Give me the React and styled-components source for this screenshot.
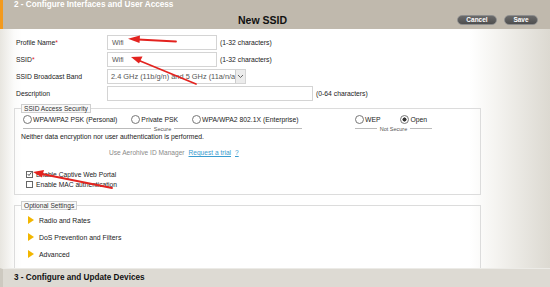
import styled, { createGlobalStyle } from "styled-components";

const GlobalStyle = createGlobalStyle`
  html, body {
    margin: 0;
    padding: 0;
    width: 550px;
    height: 287px;
    overflow: hidden;
    background: #fff;
  }
  * { box-sizing: border-box; }
`;

const FIELDS = [
  { label: "Profile Name", required: true, value: "Wifi", hint: "(1-32 characters)", width: 110 },
  { label: "SSID", required: true, value: "Wifi", hint: "(1-32 characters)", width: 110 },
  { label: "SSID Broadcast Band", select: true, value: "2.4 GHz (11b/g/n) and 5 GHz (11a/n/ac)", width: 139 },
  { label: "Description", value: "", hint: "(0-64 characters)", width: 206 },
];

const OPTIONAL = ["Radio and Rates", "DoS Prevention and Filters", "Advanced"];

const App = () => {
  return (
    <Page>
      <GlobalStyle />
      <TopBar>
        <StepTitle>2 - Configure Interfaces and User Access</StepTitle>
        <HeaderRow>
          <PanelTitle>New SSID</PanelTitle>
          <Buttons>
            <PillButton $w={40}>Cancel</PillButton>
            <PillButton $w={34}>Save</PillButton>
          </Buttons>
        </HeaderRow>
      </TopBar>

      <Content>
        <Form>
          {FIELDS.map((f) => (
            <FieldRow key={f.label}>
              <Label>
                {f.label}
                {f.required && <Req>*</Req>}
              </Label>
              {f.select ? (
                <Select $w={f.width}>
                  <SelectText>{f.value}</SelectText>
                  <SelectArrow>
                    <svg width="7" height="5" viewBox="0 0 7 5">
                      <path d="M1 1 L3.5 3.5 L6 1" fill="none" stroke="#666" strokeWidth="1" />
                    </svg>
                  </SelectArrow>
                </Select>
              ) : (
                <TextBox $w={f.width}>{f.value}</TextBox>
              )}
              {f.hint && <Hint>{f.hint}</Hint>}
            </FieldRow>
          ))}
        </Form>

        <Group $mt={3} $pb={5}>
          <Legend>SSID Access Security</Legend>
          <RadioLine>
            <RadioGroup $w={279}>
              <Radios $gap={14}>
                <Radio>WPA/WPA2 PSK (Personal)</Radio>
                <Radio>Private PSK</Radio>
                <Radio>WPA/WPA2 802.1X (Enterprise)</Radio>
              </Radios>
              <Divider>Secure</Divider>
            </RadioGroup>
            <RadioGroup $w={77}>
              <Radios $gap={20}>
                <Radio>WEP</Radio>
                <Radio $on>Open</Radio>
              </Radios>
              <Divider>Not Secure</Divider>
            </RadioGroup>
          </RadioLine>
          <Note>Neither data encryption nor user authentication is performed.</Note>
          <IdManager>
            Use Aerohive ID Manager <TrialLink>Request a trial</TrialLink>
            <TrialLink>?</TrialLink>
          </IdManager>
          <Checks>
            <Check>
              <CheckBox>
                <svg width="6" height="6" viewBox="0 0 6 6">
                  <path d="M0.8 3 L2.4 4.8 L5.3 1" fill="none" stroke="#333" strokeWidth="1" />
                </svg>
              </CheckBox>
              Enable Captive Web Portal
            </Check>
            <Check>
              <CheckBox />
              Enable MAC authentication
            </Check>
          </Checks>
        </Group>

        <Group $mt={6} $pb={9}>
          <Legend>Optional Settings</Legend>
          <Expanders>
            {OPTIONAL.map((o) => (
              <Expander key={o}>
                <svg width="6" height="8" viewBox="0 0 6 8">
                  <path d="M0 0 L6 4 L0 8 Z" fill="#f2b600" />
                </svg>
                {o}
              </Expander>
            ))}
          </Expanders>
        </Group>
      </Content>

      <BottomBar>3 - Configure and Update Devices</BottomBar>

      <Annotations width="550" height="287" viewBox="0 0 550 287">
        <g stroke="#e3231f" strokeWidth="1.8" fill="#e3231f" strokeLinecap="round">
          <line x1="138" y1="39.5" x2="176" y2="41.5" />
          <path d="M128 38.8 L140 35.5 L139.5 43 Z" stroke="none" />
          <line x1="139" y1="60.5" x2="196" y2="84" />
          <path d="M131 57 L142.5 56.5 L139 63.5 Z" stroke="none" />
          <line x1="42" y1="174" x2="112" y2="188" />
          <path d="M33 172 L44 170 L42 177.5 Z" stroke="none" />
        </g>
      </Annotations>
    </Page>
  );
};

export default App;

const Page = styled.div`
  position: relative;
  width: 550px;
  height: 287px;
  display: flex;
  flex-direction: column;
  font-family: "Liberation Sans", Arial, sans-serif;
  color: #222;
`;

const TopBar = styled.div`
  flex-shrink: 0;
  height: 29px;
  background: #c0b9ad;
  border-left: 3px solid #f39a1e;
  display: flex;
  flex-direction: column;
`;

const StepTitle = styled.div`
  color: #fff;
  font-weight: bold;
  font-size: 8.2px;
  line-height: 10px;
  padding: 0 0 0 11px;
`;

const HeaderRow = styled.div`
  flex: 1;
  display: flex;
  align-items: center;
  padding: 0 12px 0 235px;
`;

const PanelTitle = styled.div`
  flex: 1;
  font-weight: bold;
  font-size: 10.5px;
  color: #111;
`;

const Buttons = styled.div`
  display: flex;
  gap: 7px;
`;

const PillButton = styled.div`
  width: ${(p) => p.$w}px;
  background: linear-gradient(#6a6a6a, #4e4e4e);
  border: 1px solid #8d8d8d;
  border-radius: 5px;
  color: #fff;
  font-weight: bold;
  font-size: 6.5px;
  height: 10px;
  line-height: 8px;
  text-align: center;
`;

const Content = styled.div`
  flex: 1;
  min-height: 0;
  overflow: hidden;
  background: linear-gradient(
    to right,
    #e8e6e0 0px,
    #fbfbfa 14px,
    #ffffff 22px,
    #ffffff 470px,
    #f5f4f1 495px,
    #dcd9d1 550px
  );
  padding: 6px 0 0 0;
`;

const Form = styled.div`
  display: flex;
  flex-direction: column;
  gap: 2px;
  padding-left: 16px;
`;

const FieldRow = styled.div`
  display: flex;
  align-items: center;
  height: 15px;
`;

const Label = styled.div`
  width: 91px;
  font-size: 6.8px;
  color: #222;
`;

const Req = styled.span`
  color: #d22;
`;

const TextBox = styled.div`
  width: ${(p) => p.$w}px;
  height: 15px;
  border: 1px solid #d4d4d4;
  background: #fff;
  font-size: 7px;
  color: #555;
  line-height: 13px;
  padding-left: 4px;
`;

const Select = styled.div`
  width: ${(p) => p.$w}px;
  height: 15px;
  border: 1px solid #d4d4d4;
  background: #fff;
  display: flex;
  align-items: center;
  overflow: hidden;
`;

const SelectText = styled.div`
  flex: 1;
  min-width: 0;
  font-size: 7.4px;
  color: #555;
  white-space: nowrap;
  overflow: hidden;
  padding-left: 3px;
`;

const SelectArrow = styled.div`
  flex-shrink: 0;
  width: 10px;
  height: 13px;
  border-left: 1px solid #ccc;
  background: #ececec;
  display: flex;
  align-items: center;
  justify-content: center;
`;

const Hint = styled.div`
  font-size: 6.8px;
  color: #222;
  margin-left: 3px;
`;

const Group = styled.fieldset`
  margin: ${(p) => p.$mt}px 0 0 14px;
  width: 467px;
  border: 1px solid #dcdcdc;
  padding: 0 6px ${(p) => p.$pb}px;
  min-width: 0;
`;

const Legend = styled.legend`
  font-size: 6.6px;
  line-height: 7px;
  color: #333;
  border: 1px solid #cfcfcf;
  background: #f9f9f9;
  padding: 0 2px;
  margin-left: 0;
`;

const RadioLine = styled.div`
  display: flex;
  gap: 53px;
  padding-left: 2px;
  margin-top: 1px;
`;

const RadioGroup = styled.div`
  width: ${(p) => p.$w}px;
  display: flex;
  flex-direction: column;
`;

const Radios = styled.div`
  display: flex;
  gap: ${(p) => p.$gap}px;
  height: 11px;
  align-items: center;
`;

const Radio = styled.div`
  display: flex;
  align-items: center;
  font-size: 6.8px;
  color: #222;
  white-space: nowrap;
  &::before {
    content: "";
    width: 7px;
    height: 7px;
    border-radius: 50%;
    border: 1px solid #777;
    margin-right: 1px;
    background: ${(p) =>
      p.$on ? "radial-gradient(circle, #333 0 1.8px, #fff 2.3px)" : "#fff"};
  }
`;

const Divider = styled.div`
  display: flex;
  align-items: center;
  gap: 3px;
  font-size: 5.5px;
  color: #555;
  height: 7px;
  &::before,
  &::after {
    content: "";
    flex: 1;
    border-top: 1px solid #bbb;
  }
`;

const Note = styled.div`
  font-size: 6.8px;
  color: #222;
  margin-top: 1px;
`;

const IdManager = styled.div`
  font-size: 6.6px;
  color: #8a8a8a;
  margin: 9px 0 0 88px;
  display: flex;
  gap: 4px;
`;

const TrialLink = styled.span`
  color: #3a9ccf;
  text-decoration: underline;
`;

const Checks = styled.div`
  display: flex;
  flex-direction: column;
  margin: 13px 0 0 5px;
`;

const Check = styled.div`
  display: flex;
  align-items: center;
  gap: 3px;
  font-size: 6.7px;
  height: 10px;
  color: #222;
`;

const CheckBox = styled.div`
  width: 7px;
  height: 7px;
  border: 1px solid #666;
  background: #fff;
  display: flex;
  align-items: center;
  justify-content: center;
`;

const Expanders = styled.div`
  display: flex;
  flex-direction: column;
  gap: 7px;
  padding: 5px 0 0 7px;
`;

const Expander = styled.div`
  display: flex;
  align-items: center;
  gap: 5px;
  font-size: 6.9px;
  height: 10px;
  color: #222;
`;

const BottomBar = styled.div`
  flex-shrink: 0;
  height: 19px;
  background: #dddad3;
  border-top: 1px solid #ecebe7;
  border-left: 3px solid #cdc9c0;
  font-weight: bold;
  font-size: 8.2px;
  line-height: 17px;
  padding-left: 11px;
  color: #111;
`;

const Annotations = styled.svg`
  position: absolute;
  left: 0;
  top: 0;
  pointer-events: none;
`;
